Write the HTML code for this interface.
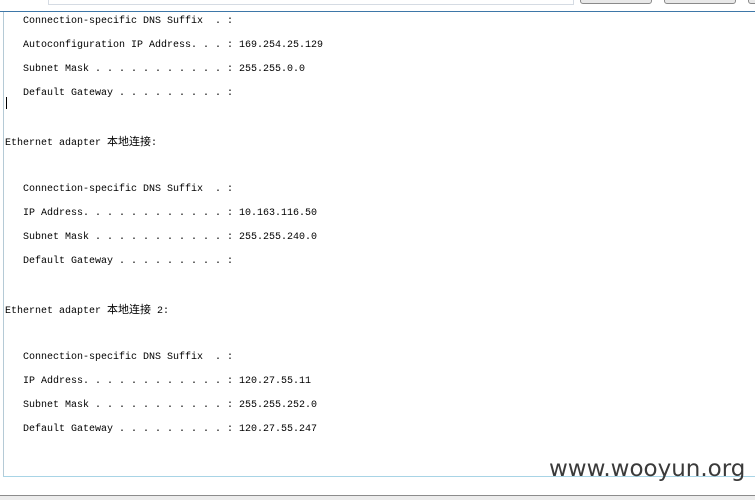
<!DOCTYPE html>
<html><head><meta charset="utf-8"><style>
body{margin:0;width:755px;height:500px;background:#fff;position:relative;overflow:hidden;font-family:"Liberation Mono","Noto Sans CJK SC",monospace;font-size:10px;color:#000}
.l{position:absolute;white-space:pre;line-height:12px;height:12px}
.c{font-family:"Liberation Sans","Noto Sans CJK SC",sans-serif;font-size:11px}
</style></head><body>
<div style="position:absolute;left:48px;top:-2px;width:524px;height:6px;border:1px solid #d5dbe3;border-top:none;background:#fff"></div>
<div style="position:absolute;left:580px;top:-4px;width:70px;height:6px;border:1px solid #8a8a8a;border-radius:3px;background:#e8e8e8"></div>
<div style="position:absolute;left:664px;top:-4px;width:70px;height:6px;border:1px solid #8a8a8a;border-radius:3px;background:#e8e8e8"></div>
<div style="position:absolute;left:748px;top:-4px;width:20px;height:6px;border:1px solid #8a8a8a;border-radius:3px;background:#e8e8e8"></div>
<div style="position:absolute;left:0;top:11px;width:755px;height:1px;background:#3e77a8"></div>
<div style="position:absolute;left:3px;top:12px;width:1px;height:465px;background:#b5cad6"></div>
<div style="position:absolute;left:3px;top:476px;width:752px;height:1px;background:#a8d4e6"></div>
<div style="position:absolute;left:0;top:495px;width:755px;height:1px;background:#8c8c8c"></div>
<div style="position:absolute;left:0;top:496px;width:755px;height:4px;background:#ececec"></div>
<div style="position:absolute;left:6px;top:97px;width:1px;height:12px;background:#000"></div>
<div class="l" style="left:23px;top:16px">Connection-specific DNS Suffix  . :</div>
<div class="l" style="left:23px;top:40px">Autoconfiguration IP Address. . . : 169.254.25.129</div>
<div class="l" style="left:23px;top:64px">Subnet Mask . . . . . . . . . . . : 255.255.0.0</div>
<div class="l" style="left:23px;top:88px">Default Gateway . . . . . . . . . :</div>
<div class="l" style="left:5px;top:136px">Ethernet adapter <span class="c">本地连接</span>:</div>
<div class="l" style="left:23px;top:184px">Connection-specific DNS Suffix  . :</div>
<div class="l" style="left:23px;top:208px">IP Address. . . . . . . . . . . . : 10.163.116.50</div>
<div class="l" style="left:23px;top:232px">Subnet Mask . . . . . . . . . . . : 255.255.240.0</div>
<div class="l" style="left:23px;top:256px">Default Gateway . . . . . . . . . :</div>
<div class="l" style="left:5px;top:304px">Ethernet adapter <span class="c">本地连接</span> 2:</div>
<div class="l" style="left:23px;top:352px">Connection-specific DNS Suffix  . :</div>
<div class="l" style="left:23px;top:376px">IP Address. . . . . . . . . . . . : 120.27.55.11</div>
<div class="l" style="left:23px;top:400px">Subnet Mask . . . . . . . . . . . : 255.255.252.0</div>
<div class="l" style="left:23px;top:424px">Default Gateway . . . . . . . . . : 120.27.55.247</div>
<div style="position:absolute;left:549px;top:456px;font-family:'DejaVu Sans','Liberation Sans',sans-serif;font-size:23px;color:#3a3a3a;line-height:26px">www.wooyun.org</div>
</body></html>
